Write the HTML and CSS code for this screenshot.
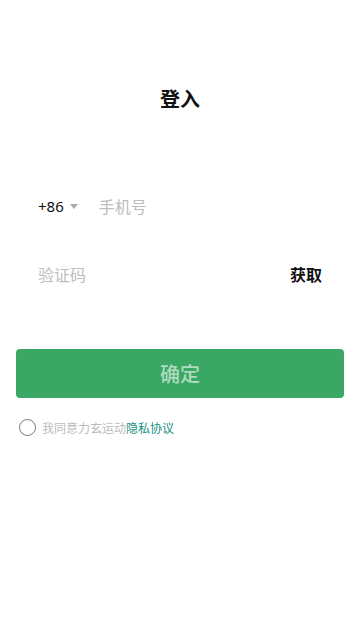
FILE: index.html
```html
<!DOCTYPE html>
<html lang="zh-CN">
<head>
    <meta charset="UTF-8">
    <meta name="viewport" content="width=device-width, initial-scale=1.0">
    <title>登入</title>
    <link rel="stylesheet" href="styles.css">
</head>
<body>
    <h1 class="title">登入</h1>

    <div class="field phone-row">
        <span class="area">+86</span>
        <span class="caret"></span>
        <span class="placeholder phone-ph">手机号</span>
    </div>

    <div class="field code-row">
        <span class="placeholder">验证码</span>
        <span class="get-code">获取</span>
    </div>

    <button class="submit">确定</button>

    <div class="agree">
        <span class="check"></span>
        <span class="agree-text">我同意力玄运动<a href="#" class="policy">隐私协议</a></span>
    </div>
</body>
</html>
```

FILE: styles.css
```css
body {
    margin: 0;
    padding: 0;
    background: #ffffff;
    font-family: "Noto Sans CJK SC", "Noto Sans", sans-serif;
    color: #111;
}
.title {
    margin: 0;
    padding-top: 84px;
    text-align: center;
    font-size: 20px;
    font-weight: 700;
    line-height: 30px;
}
.field {
    display: flex;
    align-items: center;
    height: 30px;
    padding: 0 38px;
}
.phone-row {
    margin-top: 77px;
}
.code-row {
    margin-top: 38px;
    justify-content: space-between;
    padding-right: 38px;
}
.area {
    font-family: "Noto Sans", sans-serif;
    font-size: 15px;
    color: #111;
}
.caret {
    width: 0;
    height: 0;
    margin-left: 6px;
    border-left: 4px solid transparent;
    border-right: 4px solid transparent;
    border-top: 5px solid #aaa;
}
.placeholder {
    font-size: 16px;
    color: #bdbdbd;
}
.phone-ph {
    margin-left: 21px;
}
.get-code {
    font-size: 16px;
    font-weight: 700;
    color: #111;
}
.submit {
    display: block;
    width: 328px;
    height: 49px;
    margin: 60px 16px 0;
    border: none;
    border-radius: 4px;
    background: #3aa864;
    color: rgba(255, 255, 255, 0.6);
    font-family: "Noto Sans CJK SC", sans-serif;
    font-size: 20px;
    font-weight: 500;
}
.agree {
    display: flex;
    align-items: center;
    margin-top: 21px;
    padding-left: 19px;
}
.check {
    width: 15px;
    height: 15px;
    border: 1.5px solid #777;
    border-radius: 50%;
}
.agree-text {
    margin-left: 6px;
    font-size: 12px;
    color: #bbbbbb;
}
.policy {
    color: #17917f;
    text-decoration: none;
}
```
